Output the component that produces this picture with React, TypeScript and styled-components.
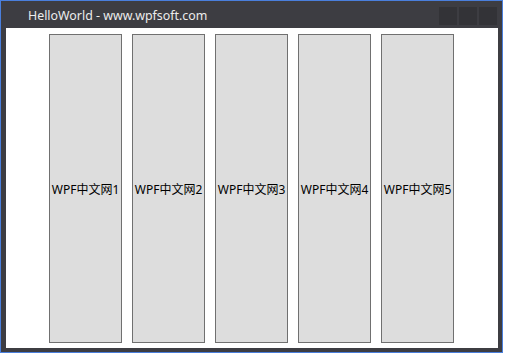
import React from "react";
import styled, { createGlobalStyle } from "styled-components";

const GlobalStyle = createGlobalStyle`
  html, body {
    margin: 0;
    padding: 0;
    background: #ffffff;
  }
  body {
    font-family: "Noto Sans", "Noto Sans CJK SC", sans-serif;
  }
`;

const Window = styled.div`
  position: relative;
  width: 503px;
  height: 353px;
  box-sizing: border-box;
  border: 1px solid #4a7fdc;
  background: #3d3d42;
  display: flex;
  flex-direction: column;
  padding: 0 4px 4px 5px;
`;

const TitleBar = styled.div`
  height: 27px;
  flex: none;
  display: flex;
  align-items: center;
  justify-content: space-between;
`;

const Title = styled.span`
  margin-left: 22px;
  margin-top: 1px;
  color: #ececec;
  font-size: 12.4px;
`;

const Controls = styled.div`
  display: flex;
  gap: 2px;
  margin-top: 6px;
  margin-right: 1px;
  align-self: flex-start;
`;

const ControlButton = styled.div`
  width: 18px;
  height: 18px;
  background: #333337;
`;

const Content = styled.div`
  flex: 1;
  background: #ffffff;
  display: flex;
  justify-content: center;
  padding: 6px 1px 5px 0;
  gap: 10px;
`;

const Tile = styled.div`
  width: 73px;
  box-sizing: border-box;
  border: 1px solid #707070;
  background: #dddddd;
  display: flex;
  align-items: center;
  justify-content: center;
  font-size: 12px;
  color: #000000;
  white-space: nowrap;
`;

const Grip = styled.div`
  position: absolute;
  left: 249px;
  bottom: -3px;
  width: 4px;
  height: 3px;
  background: #4a7fdc;
`;

const items = [1, 2, 3, 4, 5];

export default function App() {
  return (
    <>
      <GlobalStyle />
      <Window>
        <TitleBar>
          <Title>HelloWorld - www.wpfsoft.com</Title>
          <Controls>
            <ControlButton />
            <ControlButton />
            <ControlButton />
          </Controls>
        </TitleBar>
        <Content>
          {items.map((n) => (
            <Tile key={n}>WPF中文网{n}</Tile>
          ))}
        </Content>
        <Grip />
      </Window>
    </>
  );
}
